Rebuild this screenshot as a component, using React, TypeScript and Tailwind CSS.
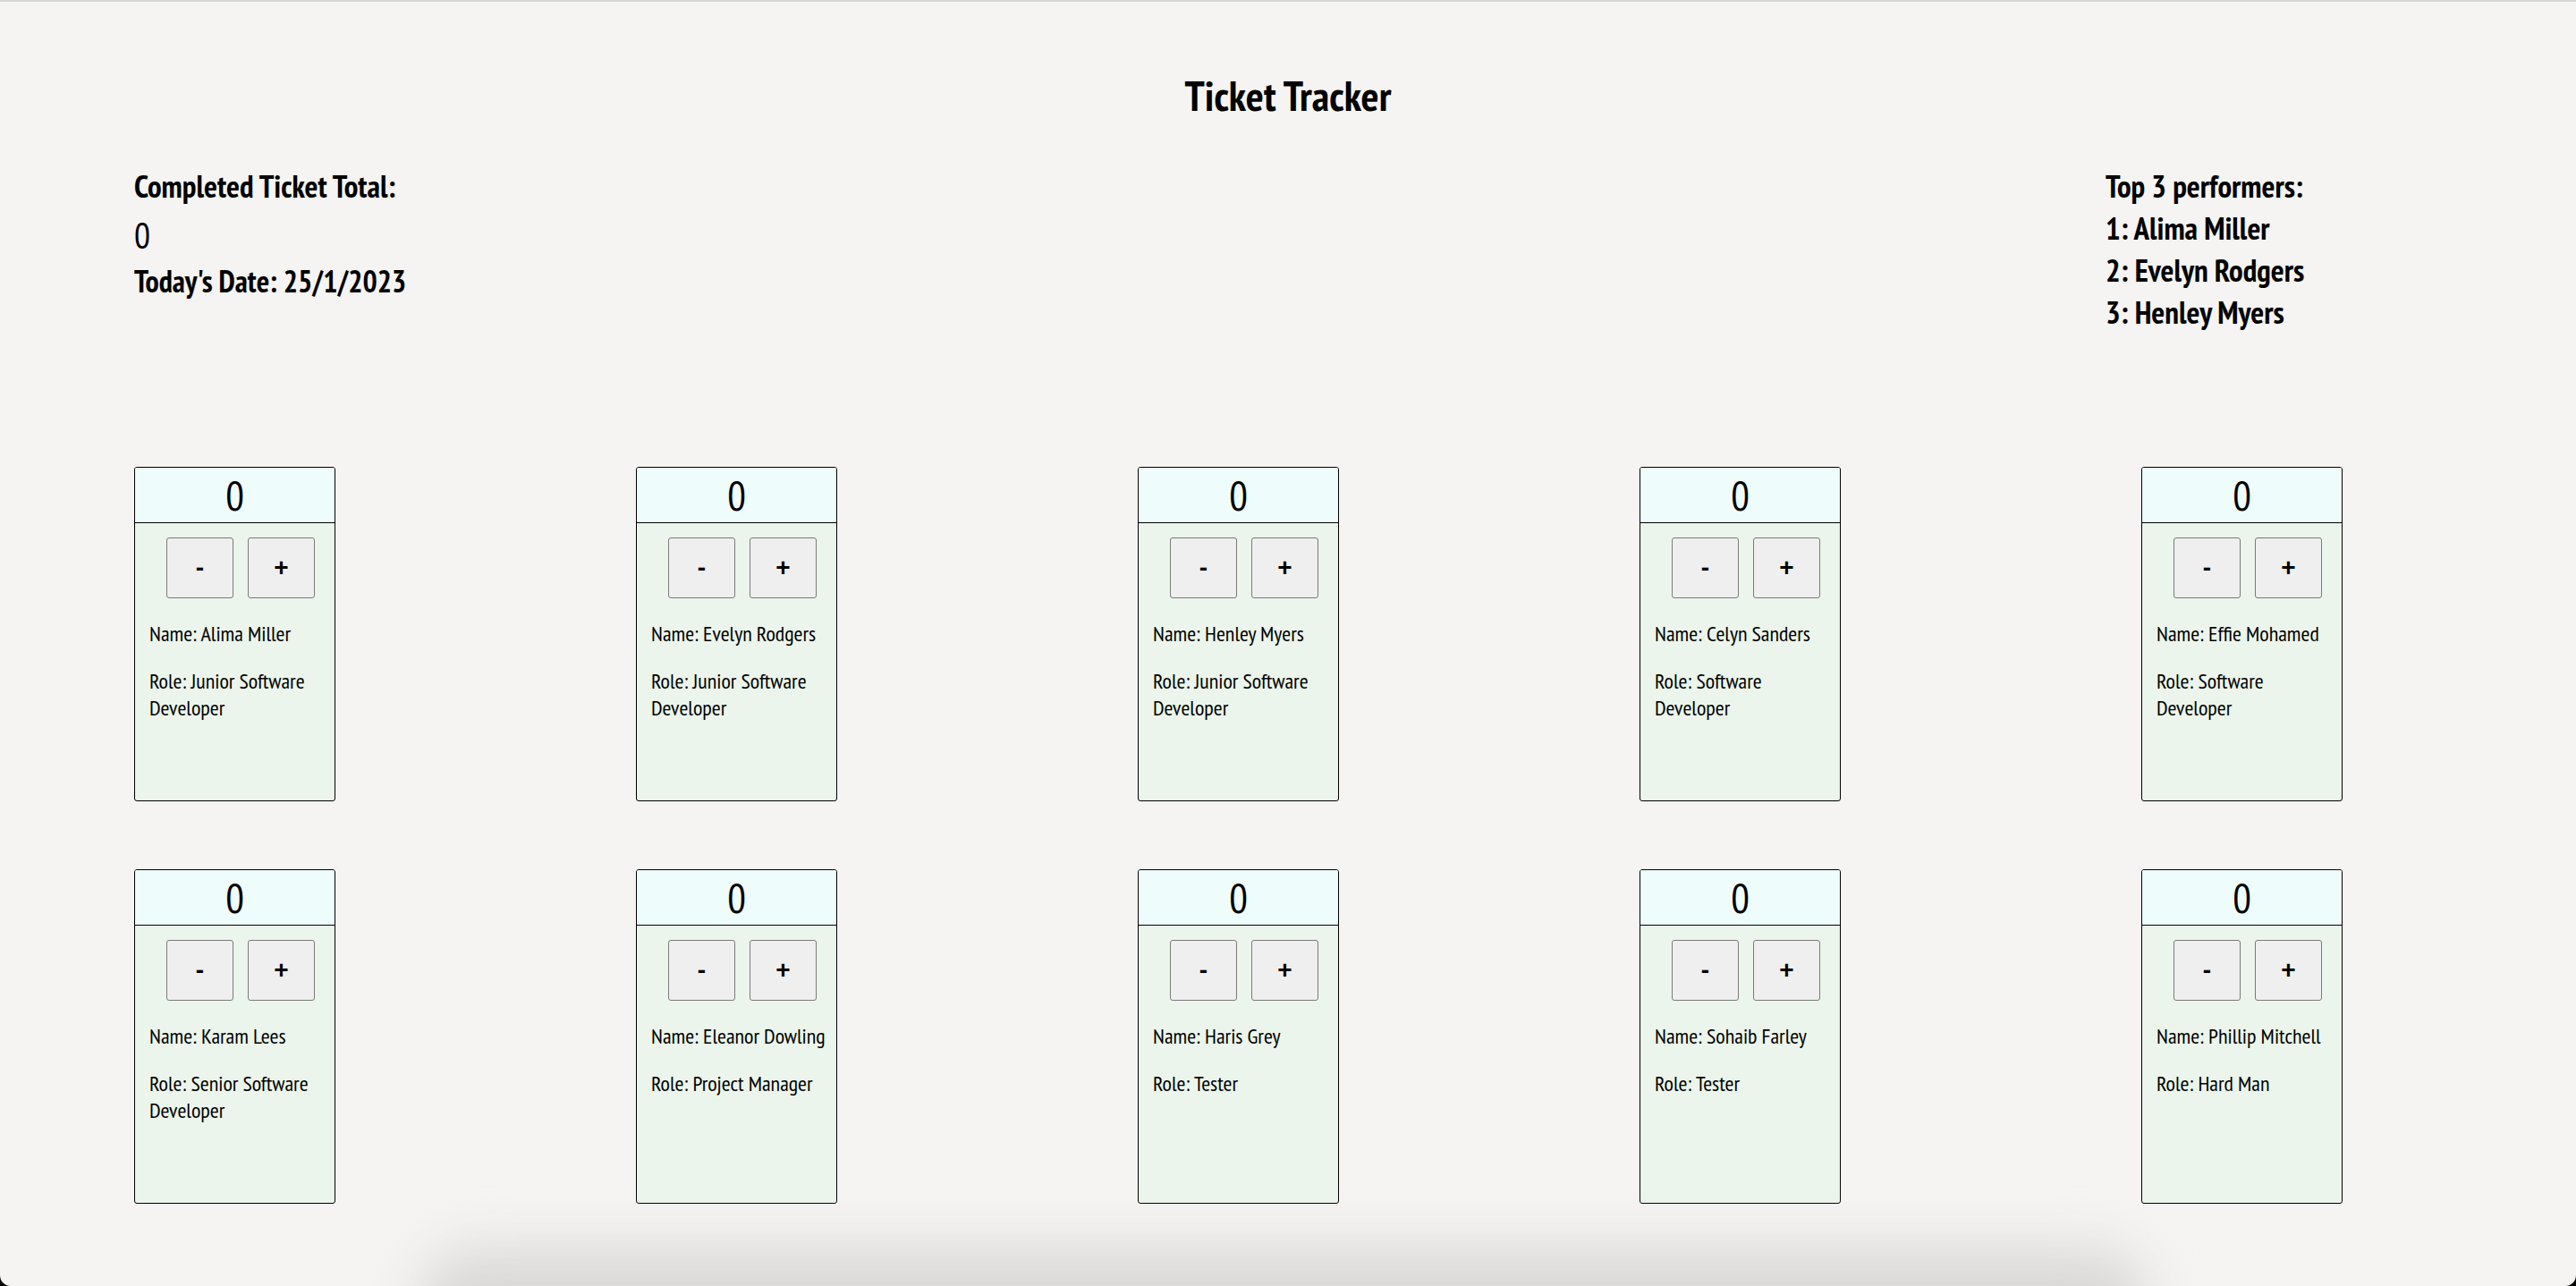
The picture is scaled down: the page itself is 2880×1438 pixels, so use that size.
import React from "react";

type Person = { name: string; role: string };

const people: Person[] = [
  { name: "Alima Miller", role: "Junior Software Developer" },
  { name: "Evelyn Rodgers", role: "Junior Software Developer" },
  { name: "Henley Myers", role: "Junior Software Developer" },
  { name: "Celyn Sanders", role: "Software Developer" },
  { name: "Effie Mohamed", role: "Software Developer" },
  { name: "Karam Lees", role: "Senior Software Developer" },
  { name: "Eleanor Dowling", role: "Project Manager" },
  { name: "Haris Grey", role: "Tester" },
  { name: "Sohaib Farley", role: "Tester" },
  { name: "Phillip Mitchell", role: "Hard Man" },
];

function Card({ p }: { p: Person }) {
  return (
    <div className="w-[225px] h-[374px] border border-black rounded-[3px] bg-[#ebf5eb] overflow-hidden flex flex-col">
      <div className="h-[62px] border-b border-black bg-[#effcfc] flex items-center justify-center text-[46px] leading-none">
        0
      </div>
      <div className="flex gap-4 pl-[35px] mt-4">
        <button className="w-[75px] h-[68px] bg-[#efefef] border border-[#7a7a7a] rounded-[3px] font-['Liberation_Sans',sans-serif] text-[28px] font-bold leading-none text-black">
          -
        </button>
        <button className="w-[75px] h-[68px] bg-[#efefef] border border-[#7a7a7a] rounded-[3px] font-['Liberation_Sans',sans-serif] text-[28px] font-bold leading-none text-black">
          +
        </button>
      </div>
      <div className="pl-4 pr-[6px] text-[24px] leading-[30px]">
        <p className="mt-[25px]">Name: {p.name}</p>
        <p className="mt-[23px]">Role: {p.role}</p>
      </div>
    </div>
  );
}

export default function App() {
  return (
    <div className="bg-black w-[2880px] h-[1438px] overflow-hidden">
      <div className="relative w-full h-full bg-[#f5f4f2] border-t-2 border-[#d4d5d7] rounded-b-[12px] overflow-hidden font-['PT_Sans_Narrow','Roboto_Condensed','Open_Sans',sans-serif] font-stretch-condensed text-black">
        <h1 className="mt-[80px] text-center text-[47px] leading-[50px] font-semibold">Ticket Tracker</h1>
        <div className="mt-[53px] flex pl-[150px]">
          <div className="w-[2204px]">
            <div className="text-[35px] leading-[46px] font-semibold whitespace-nowrap">Completed Ticket Total:</div>
            <div className="mt-1 text-[40px] leading-[56px]">0</div>
            <div className="text-[34px] leading-[46px] font-semibold whitespace-nowrap">Today's Date: 25/1/2023</div>
          </div>
          <div className="text-[35px] leading-[47px] font-semibold whitespace-nowrap">
            <div>Top 3 performers:</div>
            <div>1: Alima Miller</div>
            <div>2: Evelyn Rodgers</div>
            <div>3: Henley Myers</div>
          </div>
        </div>
        <div className="mt-[149px] pl-[150px] grid grid-cols-[repeat(5,225px)] gap-x-[336px] gap-y-[76px]">
          {people.map((p) => (
            <Card key={p.name} p={p} />
          ))}
        </div>
        <div className="absolute left-[470px] right-[480px] top-[1395px] h-[160px] rounded-[60px] bg-[#d9d8d6] blur-[30px] pointer-events-none" />
      </div>
    </div>
  );
}
